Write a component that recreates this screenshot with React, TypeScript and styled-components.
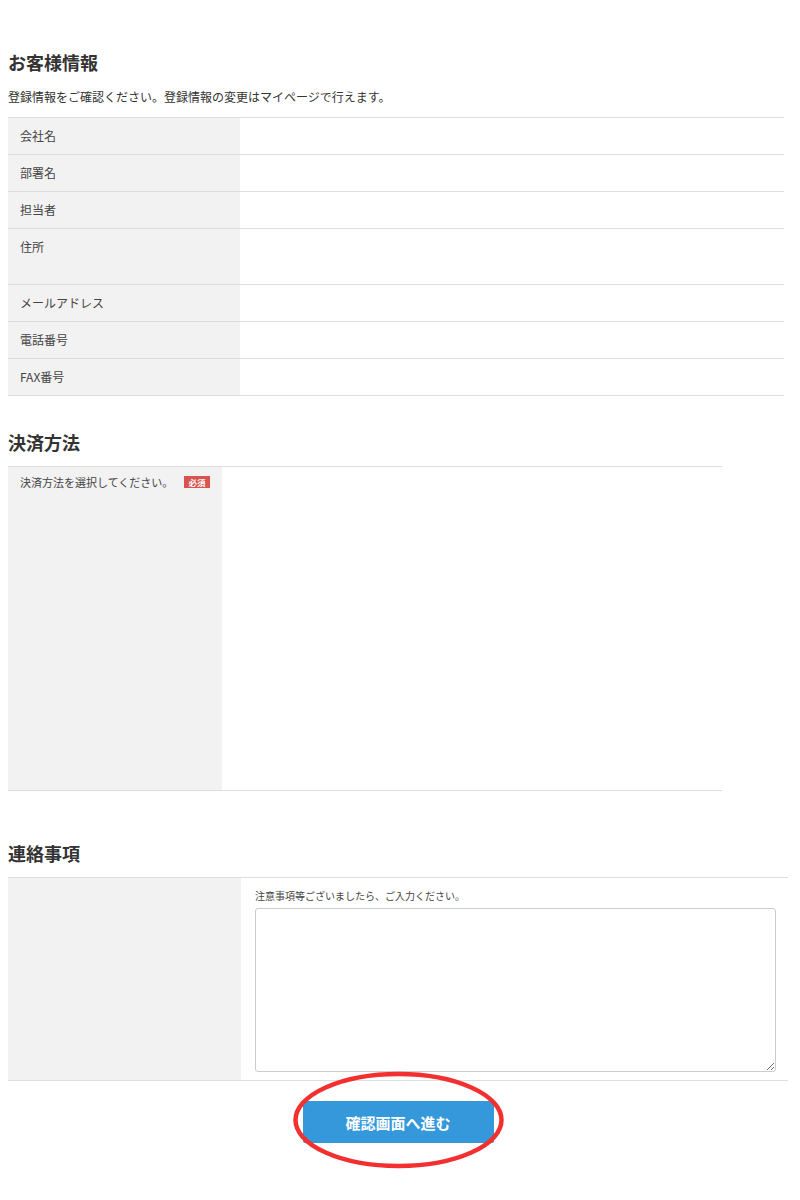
import React from "react";
import styled, { createGlobalStyle } from "styled-components";

const Global = createGlobalStyle`
  html, body { margin: 0; padding: 0; background: #fff; }
  body { font-family: "Noto Sans CJK JP", "Noto Sans", sans-serif; color: #333; }
  * { box-sizing: border-box; }
`;

const Page = styled.div`
  padding: 50px 8px 40px;
`;

const Heading = styled.h2<{ $top?: number }>`
  margin: ${(p) => p.$top ?? 0}px 0 0;
  font-size: 18px;
  line-height: 24px;
  font-weight: 700;
  color: #333;
`;

const Desc = styled.p`
  margin: 14px 0 11px;
  font-size: 12px;
  line-height: 18px;
  color: #333;
`;

const Table = styled.div<{ $width: number; $top: number }>`
  width: ${(p) => p.$width}px;
  margin-top: ${(p) => p.$top}px;
  border-top: 1px solid #dddddd;
`;

const Row = styled.div<{ $label: number; $min?: number }>`
  display: grid;
  grid-template-columns: ${(p) => p.$label}px 1fr;
  min-height: ${(p) => p.$min ?? 37}px;
  border-bottom: 1px solid #dddddd;
`;

const Label = styled.div<{ $size?: number; $pt?: number }>`
  background: #f2f2f2;
  padding: ${(p) => p.$pt ?? 9}px 12px 9px;
  font-size: ${(p) => p.$size ?? 12}px;
  line-height: 18px;
  color: #444;
  display: flex;
  align-items: flex-start;
  justify-content: space-between;
`;

const Value = styled.div`
  background: #fff;
`;

const Badge = styled.span`
  display: inline-block;
  margin-top: 3px;
  width: 26px;
  height: 12px;
  background: #d9534f;
  color: #fff;
  font-size: 8.5px;
  font-weight: 700;
  line-height: 12px;
  text-align: center;
`;

const NoteCell = styled.div`
  padding: 11px 12px 8px 14px;
  display: flex;
  flex-direction: column;
  gap: 5px;
`;

const Note = styled.div`
  font-size: 10px;
  line-height: 14px;
  color: #444;
`;

const TextArea = styled.textarea`
  width: 521px;
  height: 164px;
  border: 1px solid #cccccc;
  border-radius: 3px;
  resize: vertical;
  font-family: inherit;
  display: block;
`;

const ButtonArea = styled.div`
  width: 780px;
  display: flex;
  justify-content: center;
  padding-top: 20px;
`;

const ButtonWrap = styled.div`
  position: relative;
`;

const SubmitButton = styled.button`
  width: 191px;
  height: 42px;
  border: none;
  border-radius: 2px;
  background: #3498db;
  color: #fff;
  font-family: "Noto Sans CJK JP", sans-serif;
  font-size: 15px;
  font-weight: 700;
  cursor: pointer;
`;

const Circle = styled.svg`
  position: absolute;
  left: -11px;
  top: -31px;
  width: 213px;
  height: 100px;
  pointer-events: none;
  overflow: visible;
`;

const infoRows: { label: string; min?: number }[] = [
  { label: "会社名" },
  { label: "部署名" },
  { label: "担当者" },
  { label: "住所", min: 56 },
  { label: "メールアドレス" },
  { label: "電話番号" },
  { label: "FAX番号" },
];

export default function App() {
  return (
    <>
      <Global />
      <Page>
        <Heading>お客様情報</Heading>
        <Desc>登録情報をご確認ください。登録情報の変更はマイページで行えます。</Desc>
        <Table $width={776} $top={0}>
          {infoRows.map((r) => (
            <Row key={r.label} $label={232} $min={r.min}>
              <Label>{r.label}</Label>
              <Value />
            </Row>
          ))}
        </Table>

        <Heading $top={34}>決済方法</Heading>
        <Table $width={714} $top={12}>
          <Row $label={214} $min={324}>
            <Label $size={11} $pt={6}>
              決済方法を選択してください。
              <Badge>必須</Badge>
            </Label>
            <Value />
          </Row>
        </Table>

        <Heading $top={50}>連絡事項</Heading>
        <Table $width={780} $top={12}>
          <Row $label={233}>
            <Label />
            <NoteCell>
              <Note>注意事項等ございましたら、ご入力ください。</Note>
              <TextArea />
            </NoteCell>
          </Row>
        </Table>

        <ButtonArea>
          <ButtonWrap>
            <SubmitButton>確認画面へ進む</SubmitButton>
            <Circle viewBox="0 0 213 100">
              <ellipse cx="106.5" cy="50" rx="103" ry="46" fill="none" stroke="#f23030" strokeWidth="4.5" />
            </Circle>
          </ButtonWrap>
        </ButtonArea>
      </Page>
    </>
  );
}
